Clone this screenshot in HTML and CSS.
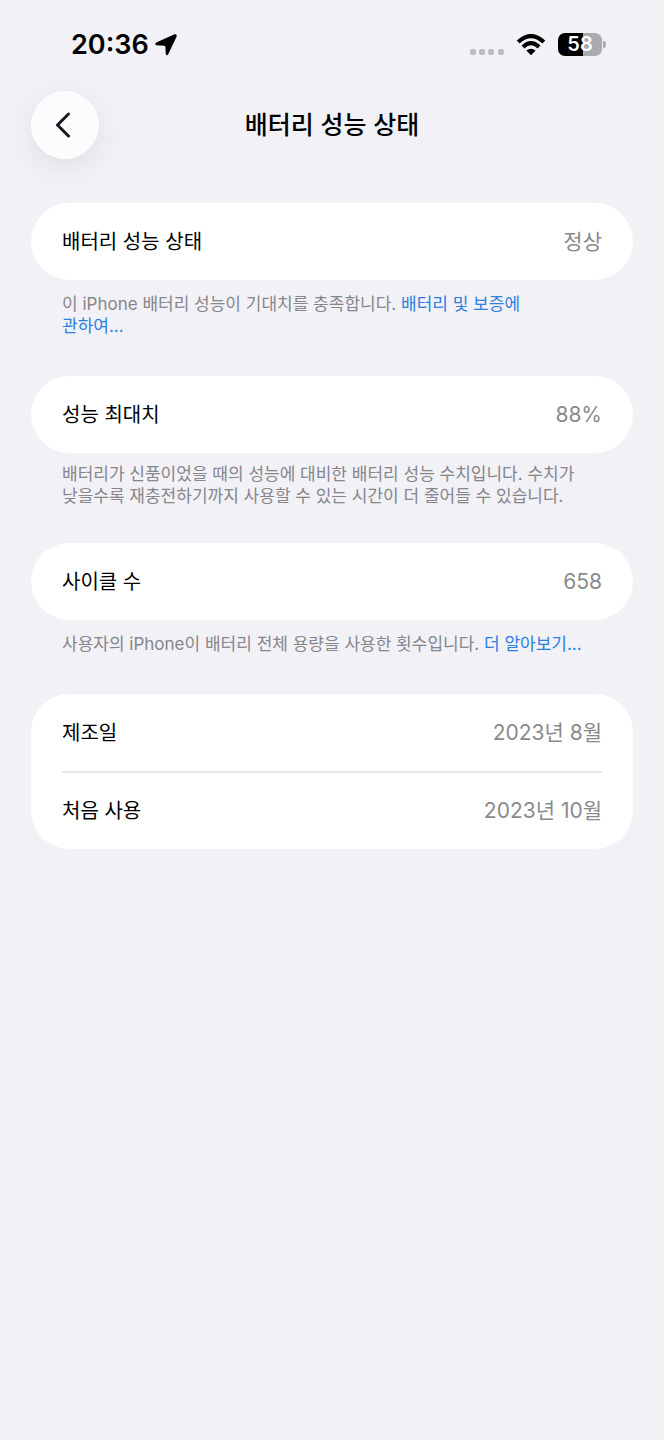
FILE: index.html
```html
<!DOCTYPE html>
<html lang="ko">
<head>
    <meta charset="UTF-8">
    <meta name="viewport" content="width=device-width, initial-scale=1.0">
    <title>배터리 성능 상태</title>
    <link rel="stylesheet" href="styles.css">
</head>
<body>
    <div class="status-bar">
        <div class="status-left">
            <span class="time">20:36</span>
            <svg class="location" width="22" height="22" viewBox="0 0 22 22" aria-hidden="true">
                <path d="M19 0.6 Q22.6 -0.6 21.4 3 L13.2 20.2 Q12 22.2 10.8 20.2 L10.4 13 Q10.3 11.9 9.2 11.8 L1.4 11.3 Q-0.8 10.2 1.3 8.6 Z"/>
            </svg>
        </div>
        <div class="status-right">
            <svg class="signal" width="34" height="6" viewBox="0 0 34 6" aria-hidden="true">
                <rect x="0" width="6" height="6" rx="2"/>
                <rect x="9" width="6" height="6" rx="2"/>
                <rect x="18" width="6" height="6" rx="2"/>
                <rect x="28" width="6" height="6" rx="2"/>
            </svg>
            <svg class="wifi" width="30" height="22" viewBox="0 0 30 22" aria-hidden="true">
                <path d="M2.2 8 Q15 -3.8 27.8 8" stroke-width="4.2"/>
                <path d="M7 13 Q15 5.4 23 13" stroke-width="4"/>
                <path class="wifi-dot" d="M10.4 16.5 Q15 12.8 19.6 16.5 L15.8 20.6 Q15 21.4 14.2 20.6 Z"/>
            </svg>
            <div class="battery">
                <span class="battery-level">58</span>
            </div>
        </div>
    </div>

    <header class="nav">
        <button class="back" type="button" aria-label="뒤로">
            <svg width="16" height="26" viewBox="0 0 16 26" aria-hidden="true">
                <path d="M13.5 2 L2.5 13 L13.5 24"/>
            </svg>
        </button>
        <h1>배터리 성능 상태</h1>
    </header>

    <main>
        <section class="group">
            <dl class="card">
                <div class="row">
                    <dt>배터리 성능 상태</dt>
                    <dd>정상</dd>
                </div>
            </dl>
            <p class="note note-link">이 iPhone 배터리 성능이 기대치를 충족합니다. <a href="#">배터리 및 보증에<br>관하여...</a></p>
        </section>

        <section class="group">
            <dl class="card">
                <div class="row">
                    <dt>성능 최대치</dt>
                    <dd>88%</dd>
                </div>
            </dl>
            <p class="note">배터리가 신품이었을 때의 성능에 대비한 배터리 성능 수치입니다. 수치가 낮을수록 재충전하기까지 사용할 수 있는 시간이 더 줄어들 수 있습니다.</p>
        </section>

        <section class="group">
            <dl class="card">
                <div class="row">
                    <dt>사이클 수</dt>
                    <dd>658</dd>
                </div>
            </dl>
            <p class="note note-link">사용자의 iPhone이 배터리 전체 용량을 사용한 횟수입니다. <a href="#">더 알아보기...</a></p>
        </section>

        <section class="group">
            <dl class="card">
                <div class="row">
                    <dt>제조일</dt>
                    <dd>2023년 8월</dd>
                </div>
                <div class="row">
                    <dt>처음 사용</dt>
                    <dd>2023년 10월</dd>
                </div>
            </dl>
        </section>
    </main>
</body>
</html>
```

FILE: styles.css
```css
* {
    box-sizing: border-box;
}
body {
    margin: 0;
    min-height: 100vh;
    background-color: #f1f1f6;
    color: #000;
    font-family: "Inter", "Noto Sans CJK KR", sans-serif;
    word-break: keep-all;
}

/* Status bar */
.status-bar {
    display: flex;
    justify-content: space-between;
    align-items: center;
    height: 91px;
    padding: 0 58px 2px 71px;
}
.status-left,
.status-right {
    display: flex;
    align-items: center;
}
.status-left {
    gap: 6px;
}
.status-right {
    gap: 12px;
}
.time {
    font-size: 27px;
    font-weight: 600;
    line-height: 32px;
}
.signal {
    fill: #bcbcc1;
    margin-top: 14px;
}
.wifi {
    fill: none;
    stroke: #000;
}
.wifi .wifi-dot {
    fill: #000;
    stroke: none;
}
.battery {
    display: flex;
    align-items: center;
    gap: 1px;
}
.battery-level {
    width: 44px;
    border-radius: 7px;
    background: linear-gradient(to right, #000 57%, #ababaf 57%);
    color: #fff;
    font-size: 20px;
    font-weight: 600;
    line-height: 23px;
    text-align: center;
}
.battery::after {
    content: "";
    width: 3px;
    height: 7px;
    border-radius: 0 3px 3px 0;
    background-color: #ababaf;
}

/* Navigation */
.nav {
    display: grid;
    grid-template-columns: 68px 1fr 68px;
    align-items: center;
    padding: 0 31px;
    margin-bottom: 44px;
}
.back {
    display: flex;
    justify-content: center;
    align-items: center;
    width: 68px;
    height: 68px;
    padding: 0 4px 0 0;
    border: 1px solid #fff;
    border-radius: 50%;
    background-color: #fcfcff;
    box-shadow: 0 8px 32px rgba(0, 0, 0, 0.08);
    cursor: pointer;
}
.back path {
    fill: none;
    stroke: #17171c;
    stroke-width: 3;
    stroke-linecap: round;
    stroke-linejoin: round;
}
h1 {
    margin: 0;
    font-size: 25px;
    font-weight: 500;
    line-height: 32px;
    text-align: center;
}

/* Grouped list */
main {
    padding: 0 31px;
}
.card {
    margin: 0;
    padding: 0 31px;
    border-radius: 38px;
    background-color: #fff;
}
.row {
    display: flex;
    justify-content: space-between;
    align-items: center;
    height: 77px;
    font-size: 21px;
    line-height: 28px;
}
.row + .row {
    height: 78px;
    border-top: 2px solid #e6e6e9;
}
dt {
    font-size: 20px;
}
dd {
    margin: 0;
    color: #8a8a8d;
}
.note {
    margin: 0;
    padding: 10px 31px 36px;
    color: #86868b;
    font-size: 17px;
    line-height: 22px;
}
.note-link {
    padding-top: 13px;
    padding-bottom: 39px;
}
.note a {
    color: #2a7fe0;
    text-decoration: none;
}
```
